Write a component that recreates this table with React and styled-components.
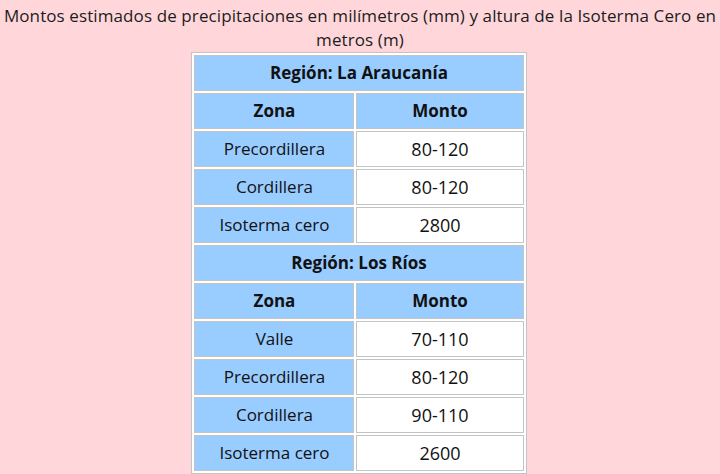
import React from 'react';
import styled, {createGlobalStyle} from 'styled-components';

const GlobalStyle = createGlobalStyle`
    html, body {
        margin: 0;
        padding: 0;
        overflow: hidden;
        background: #ffd7db;
    }
    body {
        font-family: "Open Sans", "Noto Sans", sans-serif;
        color: #111;
    }
`

const Page = styled.div`
    display: flex;
    flex-direction: column;
    align-items: center;
    padding-top: 4px;
`

const Title = styled.h1`
    margin: 0;
    font-size: 17px;
    font-weight: 400;
    line-height: 24px;
    text-align: center;
    color: #1c1c1c;
    letter-spacing: 0.1px;
`

const Table = styled.table`
    table-layout: fixed;
    width: 335px;
    border: 1px solid #c4c4c4;
    border-spacing: 2px;
    background: #ffffff;
    margin-left: -2px;
`

const Cell = styled.td`
    height: 34px;
    padding: 0 4px;
    border: 1px solid #c4c4c4;
    background: ${props => props.$blue ? '#99ccff' : '#ffffff'};
    font-size: ${props => props.$num ? '18px' : '17px'};
    font-weight: ${props => props.$bold ? 700 : 400};
    text-align: center;
    line-height: 22px;
    color: #111;
`

const regions = [
    {
        name: 'La Araucanía',
        rows: [
            ['Precordillera', '80-120'],
            ['Cordillera', '80-120'],
            ['Isoterma cero', '2800'],
        ],
    },
    {
        name: 'Los Ríos',
        rows: [
            ['Valle', '70-110'],
            ['Precordillera', '80-120'],
            ['Cordillera', '90-110'],
            ['Isoterma cero', '2600'],
        ],
    },
]

function RegionBlock({region}) {
    return (
        <>
            <tr>
                <Cell $blue $bold colSpan={2}>Región: {region.name}</Cell>
            </tr>
            <tr>
                <Cell $blue $bold>Zona</Cell>
                <Cell $blue $bold>Monto</Cell>
            </tr>
            {region.rows.map((row, index) =>
                <tr key={index}>
                    <Cell $blue>{row[0]}</Cell>
                    <Cell $num>{row[1]}</Cell>
                </tr>
            )}
        </>
    )
}

function App() {
    return (
        <Page>
            <GlobalStyle />
            <Title>
                Montos estimados de precipitaciones en milímetros (mm) y altura de la Isoterma Cero en metros (m)
            </Title>
            <Table>
                <colgroup>
                    <col style={{width: 160}} />
                    <col style={{width: 167}} />
                </colgroup>
                <tbody>
                    {regions.map((region, index) =>
                        <RegionBlock key={index} region={region} />)
                    }
                </tbody>
            </Table>
        </Page>
    )
}

export default App
